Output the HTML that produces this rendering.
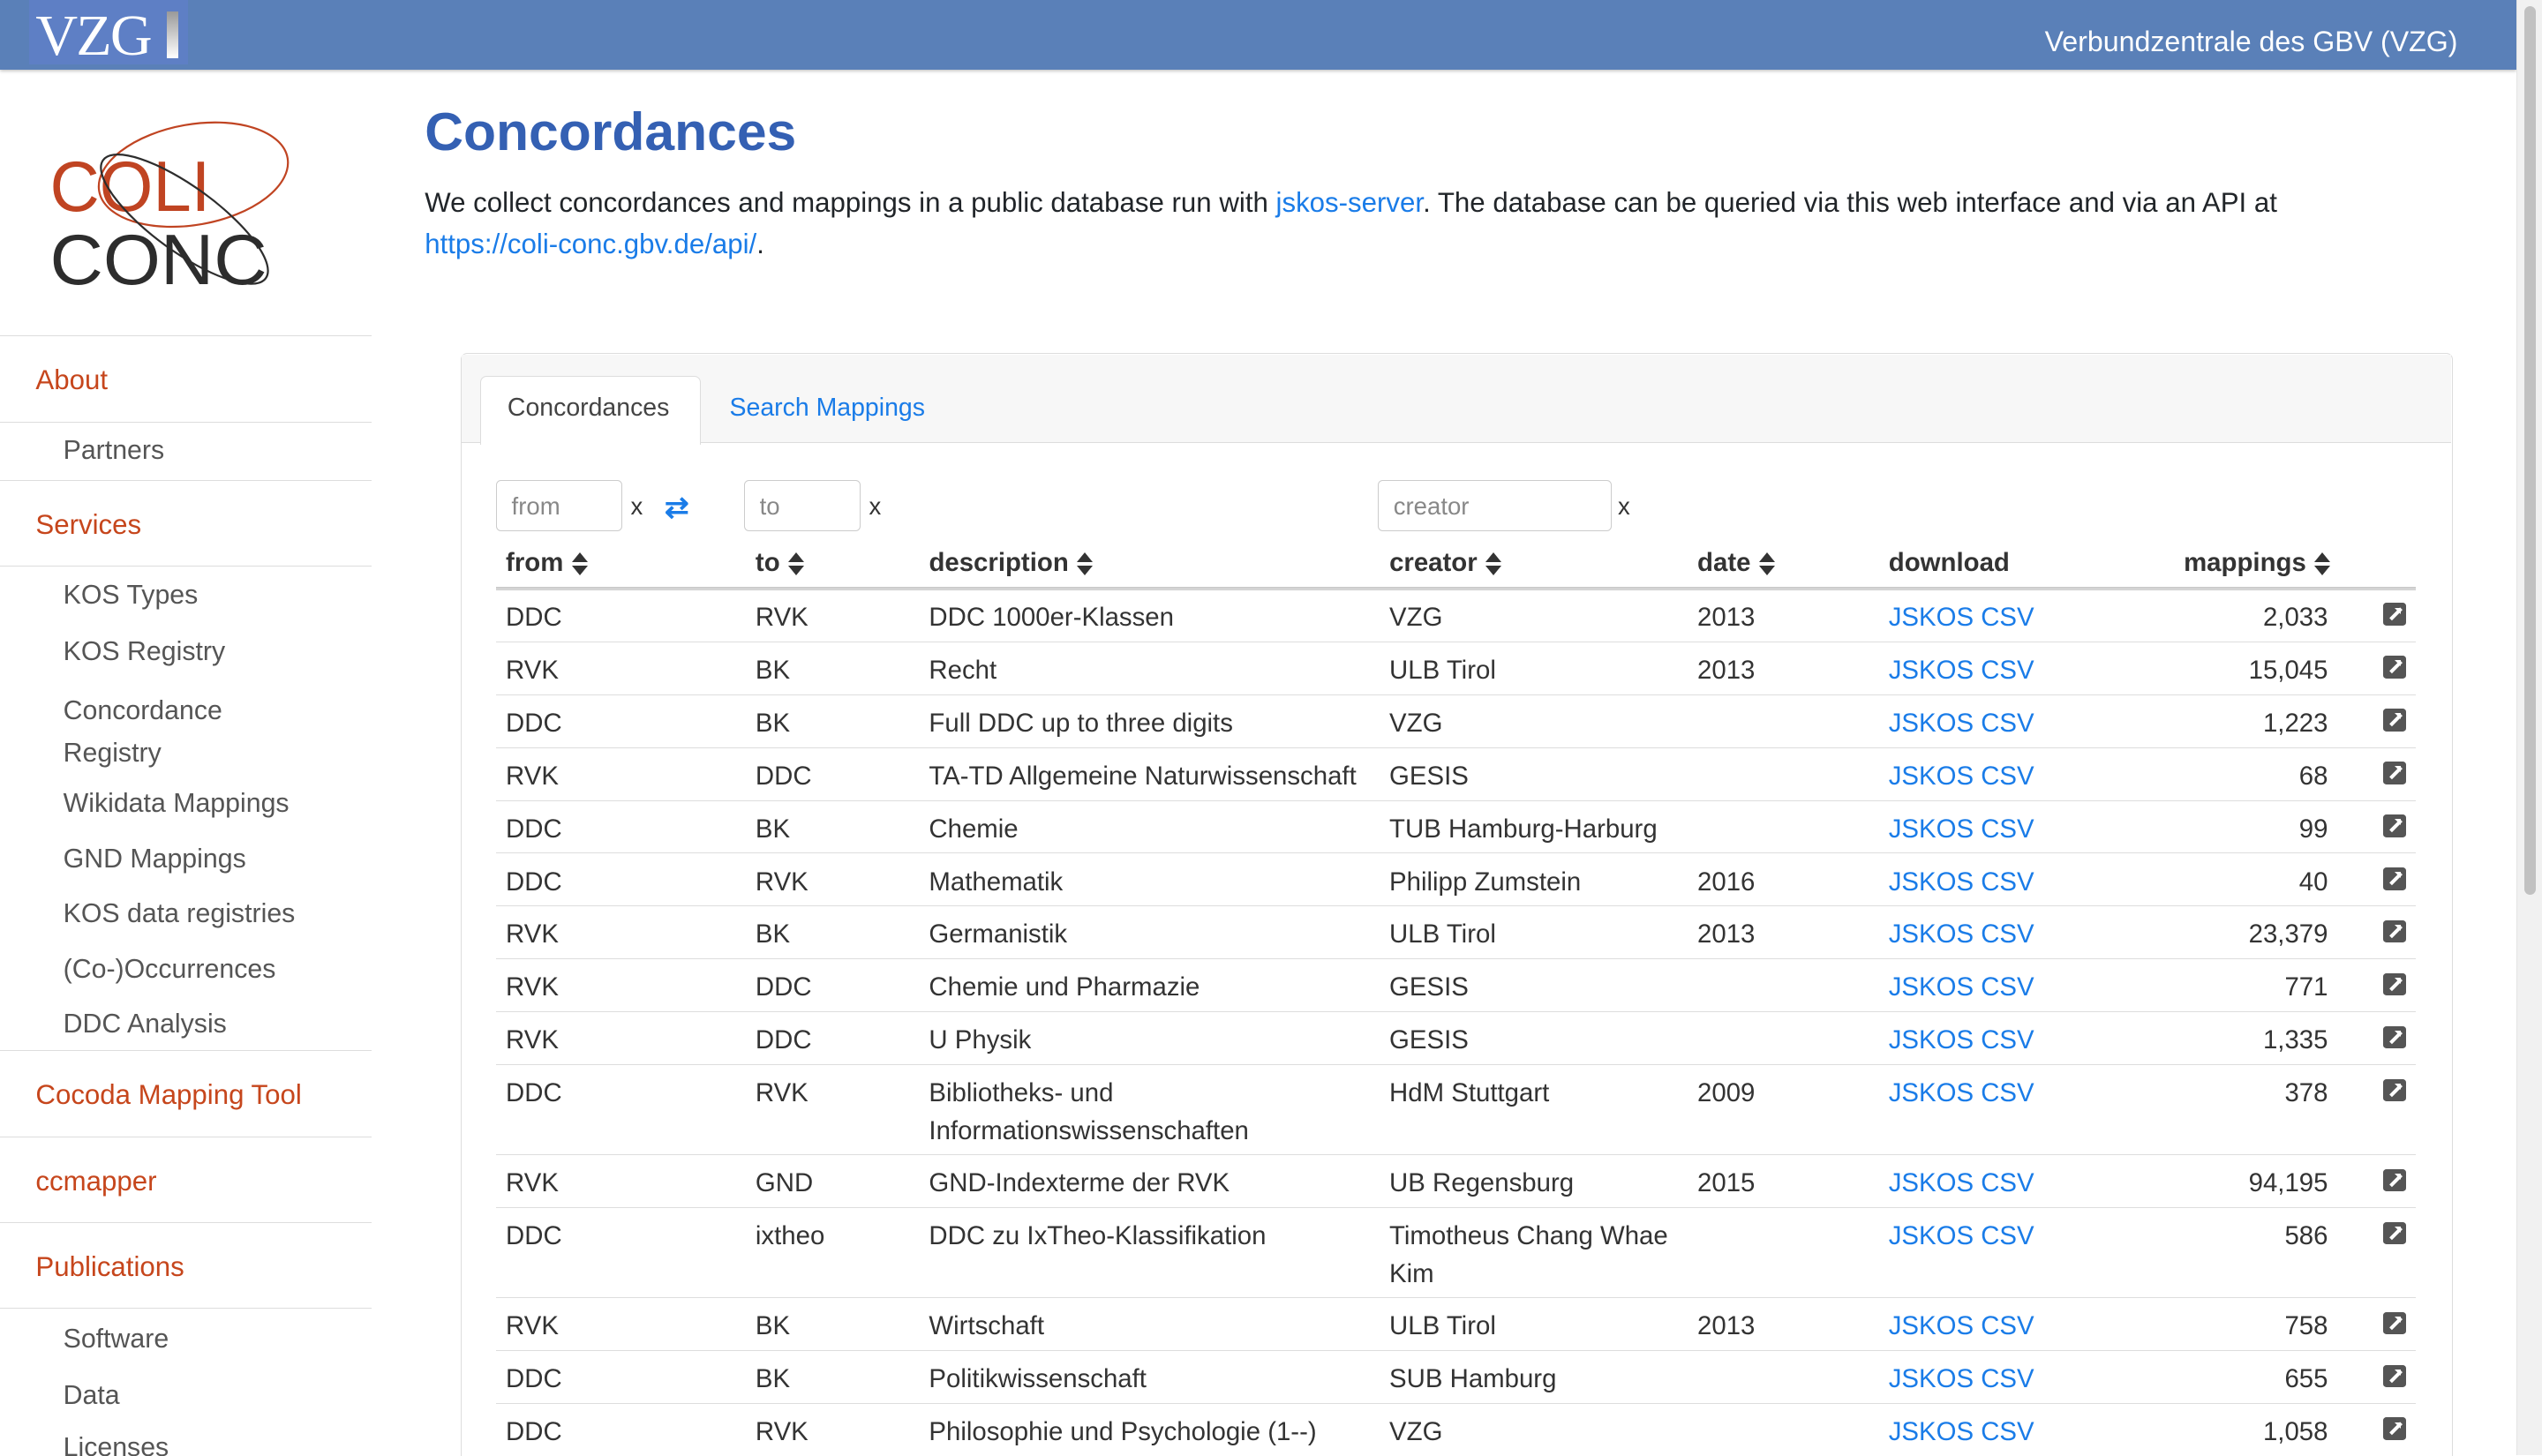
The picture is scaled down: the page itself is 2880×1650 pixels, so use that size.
<!DOCTYPE html>
<html><head><meta charset="utf-8">
<style>
html,body{margin:0;padding:0;background:#fff;overflow:hidden}
body{zoom:1.83673;width:1568px;height:898px;position:relative;font-family:"Liberation Sans",sans-serif;color:#212529}
.abs{position:absolute}
#hdr{left:0;top:0;width:1552px;height:43px;background:#5a80b8;box-shadow:0 1px 2px rgba(0,0,0,.25)}
#gbv{right:52px;top:16px;color:#fff;font-size:17.5px}
#scroll{left:1552px;top:0;width:16px;height:898px;background:#f1f1f1;border-left:1px solid #e4e4e4}
#thumb{left:1557px;top:4px;width:7px;height:548px;background:#c1c1c1;border-radius:4px}
.sl{position:absolute;left:0;width:229px;border-top:1px solid #ddd}
.o{position:absolute;left:22px;color:#c6461c;font-size:17px}
.g{position:absolute;left:39px;color:#555;font-size:16.5px}
h1{position:absolute;left:262px;top:62px;margin:0;font-size:33px;color:#3460b3;font-weight:bold}
.intro{left:262px;top:112px;font-size:17px;line-height:26px;width:1230px}
a{color:#1a7ce8;text-decoration:none}
#panel{left:284px;top:218px;width:1228px;height:700px;border:1px solid #ddd;border-radius:4px}
#tabbar{left:285px;top:219px;width:1227px;height:54px;background:#f7f7f7;border-bottom:1px solid #ddd}
#tab1{left:296px;top:232px;width:135px;height:42px;background:#fff;border:1px solid #ddd;border-bottom:none;border-radius:4px 4px 0 0}
.inp{position:absolute;top:296px;height:32px;border:1px solid #ccc;border-radius:3px;box-sizing:border-box;color:#888;font-size:15px;padding:7px 9px}
.x{position:absolute;top:304px;font-size:15px;color:#333}
.th{position:absolute;top:338px;font-weight:bold;font-size:16px;color:#333}
.srt{display:inline-block;vertical-align:middle;margin-left:5px;width:10px;height:14px;position:relative}
.srt:before{content:"";position:absolute;left:0;top:0;border:5px solid transparent;border-bottom:6px solid #333;border-top:0}
.srt:after{content:"";position:absolute;left:0;top:8px;border:5px solid transparent;border-top:6px solid #333;border-bottom:0}
table{position:absolute;left:306px;top:363px;width:1184px;border-collapse:collapse;font-size:16px;color:#333}
td{border-top:1px solid #ddd;vertical-align:top;padding:6px 0 0 0;height:26.1px;line-height:23px}
td.n{text-align:right}
td.i{text-align:right;padding-right:6px}
.ic{display:inline-block;width:14px;height:14px;background:#555;border-radius:2px;position:relative;margin-top:2px}
.ic:after{content:"";position:absolute;left:3px;top:6px;width:9px;height:2px;background:#fff;transform:rotate(-45deg)}
.ic:before{content:"";position:absolute;left:7px;top:3px;border-left:4px solid transparent;border-top:4px solid #fff;}
</style></head><body>
<div id="hdr" class="abs"></div>
<div class="abs" style="left:18px;top:0;width:98px;height:40px;background:#5e7fc5"></div>
<div class="abs" style="left:22px;top:2px;font-family:'Liberation Serif',serif;font-size:36px;color:#fff;line-height:40px;letter-spacing:-1px">VZG</div>
<div class="abs" style="left:103px;top:7px;width:7px;height:29px;background:linear-gradient(#999,#fff)"></div>
<div id="gbv" class="abs">Verbundzentrale des GBV (VZG)</div>
<div id="scroll" class="abs"></div><div id="thumb" class="abs"></div>

<svg class="abs" style="left:28px;top:70px" width="160" height="115" viewBox="0 0 160 115">
<text x="3" y="60" font-family="Liberation Sans,sans-serif" font-size="44" fill="#c04422" textLength="99" lengthAdjust="spacingAndGlyphs">COLI</text>
<text x="3" y="105" font-family="Liberation Sans,sans-serif" font-size="44" fill="#2d2d2d" textLength="134" lengthAdjust="spacingAndGlyphs">CONC</text>
<ellipse cx="91.5" cy="37.5" rx="59" ry="31" transform="rotate(-10 91.5 37.5)" fill="none" stroke="#c04422" stroke-width="1.2"/>
<ellipse cx="86" cy="65" rx="62" ry="20" transform="rotate(36 86 65)" fill="none" stroke="#2d2d2d" stroke-width="1.2"/>
</svg>

<div class="sl" style="top:207px"></div>
<div class="o" style="top:225px">About</div>
<div class="sl" style="top:260px"></div>
<div class="g" style="top:269px">Partners</div>
<div class="sl" style="top:296px"></div>
<div class="o" style="top:314px">Services</div>
<div class="sl" style="top:349px"></div>
<div class="g" style="top:358px">KOS Types</div>
<div class="g" style="top:393px">KOS Registry</div>
<div class="g" style="top:426px;line-height:26px">Concordance<br>Registry</div>
<div class="g" style="top:487px">Wikidata Mappings</div>
<div class="g" style="top:521px">GND Mappings</div>
<div class="g" style="top:555px">KOS data registries</div>
<div class="g" style="top:589px">(Co-)Occurrences</div>
<div class="g" style="top:623px">DDC Analysis</div>
<div class="sl" style="top:648px"></div>
<div class="o" style="top:666px">Cocoda Mapping Tool</div>
<div class="sl" style="top:701px"></div>
<div class="o" style="top:719px">ccmapper</div>
<div class="sl" style="top:754px"></div>
<div class="o" style="top:772px">Publications</div>
<div class="sl" style="top:807px"></div>
<div class="g" style="top:817px">Software</div>
<div class="g" style="top:852px">Data</div>
<div class="g" style="top:884px">Licenses</div>

<h1>Concordances</h1>
<div class="abs intro">We collect concordances and mappings in a public database run with <a>jskos-server</a>. The database can be queried via this web interface and via an API at <a style="white-space:nowrap">https://coli-conc.gbv.de/api/</a>.</div>

<div id="panel" class="abs"></div>
<div id="tabbar" class="abs"></div>
<div id="tab1" class="abs"></div>
<div class="abs" style="left:313px;top:243px;font-size:15.5px;color:#444">Concordances</div>
<div class="abs" style="left:450px;top:243px;font-size:15.5px;color:#1a7ce8">Search Mappings</div>

<div class="inp" style="left:306px;width:78px">from</div><div class="x" style="left:389px">x</div>
<div class="abs" style="left:410px;top:302px;color:#1a7ce8;font-size:18px;font-weight:bold">⇄</div>
<div class="inp" style="left:459px;width:72px">to</div><div class="x" style="left:536px">x</div>
<div class="inp" style="left:850px;width:144px">creator</div><div class="x" style="left:998px">x</div>

<div class="th" style="left:312px">from<span class="srt"></span></div>
<div class="th" style="left:466px">to<span class="srt"></span></div>
<div class="th" style="left:573px">description<span class="srt"></span></div>
<div class="th" style="left:857px">creator<span class="srt"></span></div>
<div class="th" style="left:1047px">date<span class="srt"></span></div>
<div class="th" style="left:1165px">download</div>
<div class="th" style="left:1347px">mappings<span class="srt"></span></div>
<div class="abs" style="left:306px;top:362px;width:1184px;height:2px;background:#ccc"></div>

<table>
<colgroup><col style="width:160px"><col style="width:107px"><col style="width:284px"><col style="width:190px"><col style="width:118px"><col style="width:120px"><col style="width:151px"><col></colgroup>
<tr><td style="padding-left:6px">DDC</td><td>RVK</td><td>DDC 1000er-Klassen</td><td>VZG</td><td>2013</td><td><a>JSKOS CSV</a></td><td class="n">2,033</td><td class="i"><span class="ic"></span></td></tr>
<tr><td style="padding-left:6px">RVK</td><td>BK</td><td>Recht</td><td>ULB Tirol</td><td>2013</td><td><a>JSKOS CSV</a></td><td class="n">15,045</td><td class="i"><span class="ic"></span></td></tr>
<tr><td style="padding-left:6px">DDC</td><td>BK</td><td>Full DDC up to three digits</td><td>VZG</td><td></td><td><a>JSKOS CSV</a></td><td class="n">1,223</td><td class="i"><span class="ic"></span></td></tr>
<tr><td style="padding-left:6px">RVK</td><td>DDC</td><td>TA-TD Allgemeine Naturwissenschaft</td><td>GESIS</td><td></td><td><a>JSKOS CSV</a></td><td class="n">68</td><td class="i"><span class="ic"></span></td></tr>
<tr><td style="padding-left:6px">DDC</td><td>BK</td><td>Chemie</td><td>TUB Hamburg-Harburg</td><td></td><td><a>JSKOS CSV</a></td><td class="n">99</td><td class="i"><span class="ic"></span></td></tr>
<tr><td style="padding-left:6px">DDC</td><td>RVK</td><td>Mathematik</td><td>Philipp Zumstein</td><td>2016</td><td><a>JSKOS CSV</a></td><td class="n">40</td><td class="i"><span class="ic"></span></td></tr>
<tr><td style="padding-left:6px">RVK</td><td>BK</td><td>Germanistik</td><td>ULB Tirol</td><td>2013</td><td><a>JSKOS CSV</a></td><td class="n">23,379</td><td class="i"><span class="ic"></span></td></tr>
<tr><td style="padding-left:6px">RVK</td><td>DDC</td><td>Chemie und Pharmazie</td><td>GESIS</td><td></td><td><a>JSKOS CSV</a></td><td class="n">771</td><td class="i"><span class="ic"></span></td></tr>
<tr><td style="padding-left:6px">RVK</td><td>DDC</td><td>U Physik</td><td>GESIS</td><td></td><td><a>JSKOS CSV</a></td><td class="n">1,335</td><td class="i"><span class="ic"></span></td></tr>
<tr><td style="padding-left:6px;height:49px">DDC</td><td>RVK</td><td>Bibliotheks- und<br>Informationswissenschaften</td><td>HdM Stuttgart</td><td>2009</td><td><a>JSKOS CSV</a></td><td class="n">378</td><td class="i"><span class="ic"></span></td></tr>
<tr><td style="padding-left:6px">RVK</td><td>GND</td><td>GND-Indexterme der RVK</td><td>UB Regensburg</td><td>2015</td><td><a>JSKOS CSV</a></td><td class="n">94,195</td><td class="i"><span class="ic"></span></td></tr>
<tr><td style="padding-left:6px;height:49px">DDC</td><td>ixtheo</td><td>DDC zu IxTheo-Klassifikation</td><td>Timotheus Chang Whae<br>Kim</td><td></td><td><a>JSKOS CSV</a></td><td class="n">586</td><td class="i"><span class="ic"></span></td></tr>
<tr><td style="padding-left:6px">RVK</td><td>BK</td><td>Wirtschaft</td><td>ULB Tirol</td><td>2013</td><td><a>JSKOS CSV</a></td><td class="n">758</td><td class="i"><span class="ic"></span></td></tr>
<tr><td style="padding-left:6px">DDC</td><td>BK</td><td>Politikwissenschaft</td><td>SUB Hamburg</td><td></td><td><a>JSKOS CSV</a></td><td class="n">655</td><td class="i"><span class="ic"></span></td></tr>
<tr><td style="padding-left:6px">DDC</td><td>RVK</td><td>Philosophie und Psychologie (1--)</td><td>VZG</td><td></td><td><a>JSKOS CSV</a></td><td class="n">1,058</td><td class="i"><span class="ic"></span></td></tr>
</table>
</body></html>
